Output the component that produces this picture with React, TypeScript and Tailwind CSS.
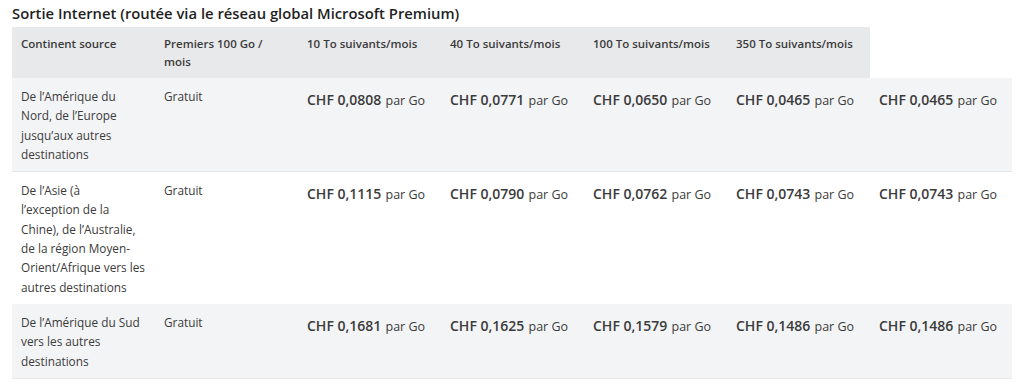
const cols = [
  "Continent source",
  "Premiers 100 Go / mois",
  "10 To suivants/mois",
  "40 To suivants/mois",
  "100 To suivants/mois",
  "350 To suivants/mois",
]

const rows = [
  {
    source: ["De l’Amérique du", "Nord, de l’Europe", "jusqu’aux autres", "destinations"],
    prices: ["0,0808", "0,0771", "0,0650", "0,0465", "0,0465"],
  },
  {
    source: [
      "De l’Asie (à",
      "l’exception de la",
      "Chine), de l’Australie,",
      "de la région Moyen-",
      "Orient/Afrique vers les",
      "autres destinations",
    ],
    prices: ["0,1115", "0,0790", "0,0762", "0,0743", "0,0743"],
  },
  {
    source: ["De l’Amérique du Sud", "vers les autres", "destinations"],
    prices: ["0,1681", "0,1625", "0,1579", "0,1486", "0,1486"],
  },
]

export default function App() {
  return (
    <div className="bg-white w-[1024px] h-[384px] overflow-hidden px-3 text-[#3b3b3b]" style={{ fontFamily: '"Open Sans", "Noto Sans", sans-serif' }}>
      <h2 className="text-[14.8px] font-semibold text-[#1f1f1f] leading-[26px]">
        Sortie Internet (routée via le réseau global Microsoft Premium)
      </h2>
      <table className="table-fixed border-collapse w-[1000px] mt-px">
        <colgroup>
          <col className="w-[143px]" />
          <col className="w-[143px]" />
          <col className="w-[143px]" />
          <col className="w-[143px]" />
          <col className="w-[143px]" />
          <col className="w-[143px]" />
          <col className="w-[142px]" />
        </colgroup>
        <thead>
          <tr>
            {cols.map((c) => (
              <th key={c} className="bg-[#e8e9eb] text-left align-top font-semibold text-[11.5px] leading-[18px] pl-[9px] pr-3 pt-[8px] pb-[7px]">
                {c}
              </th>
            ))}
            <th className="bg-white" />
          </tr>
        </thead>
        <tbody>
          {rows.map((r, i) => (
            <tr key={i} className={i % 2 === 0 ? "bg-[#f3f4f6] border-b border-[#e6e6e6]" : "bg-white"}>
              <td className="align-top text-[11.8px] leading-[19.3px] pl-[9px] pr-0 pt-[9px] pb-[7px]">
                {r.source.map((l) => (
                  <span key={l} className="block whitespace-nowrap">{l}</span>
                ))}
              </td>
              <td className="align-top text-[11.8px] leading-[19.3px] pl-[9px] pr-2 pt-[9px] pb-[7px]">Gratuit</td>
              {r.prices.map((p, j) => (
                <td key={j} className="align-top pl-[9px] pr-0 pt-[9px] pb-[7px] whitespace-nowrap leading-[24px]">
                  <span className="text-[14px] font-semibold">CHF {p}</span>{" "}
                  <span className="text-[12.5px]">par Go</span>
                </td>
              ))}
            </tr>
          ))}
        </tbody>
      </table>
    </div>
  )
}
